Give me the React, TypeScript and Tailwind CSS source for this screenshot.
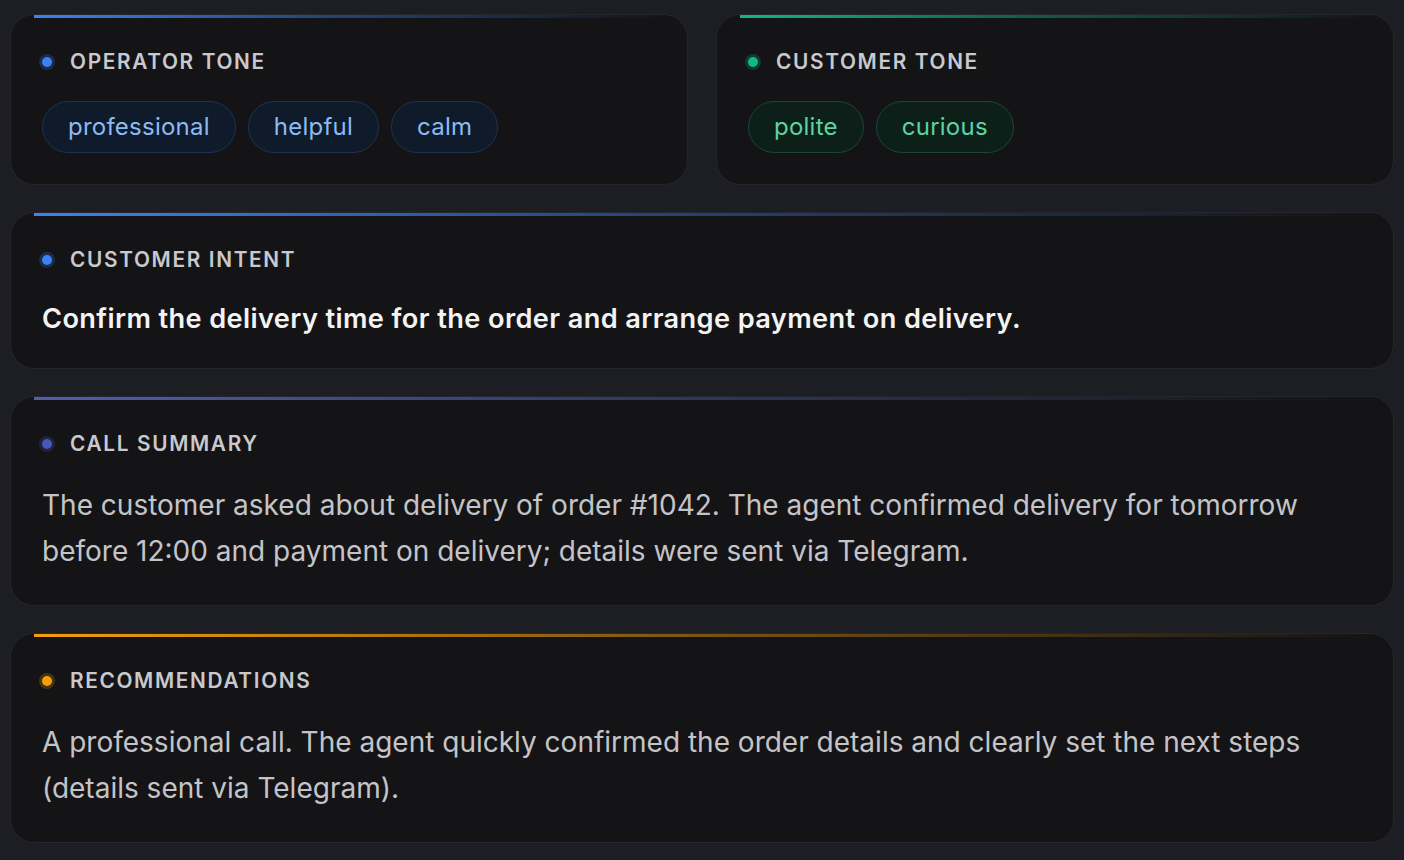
import React from "react";

type Accent = { line: string; dot: string; ring: string };

const ACC: Record<string, Accent> = {
  blue: {
    line: "bg-[linear-gradient(90deg,#3b82f6_0%,rgba(59,130,246,0.45)_45%,rgba(59,130,246,0)_100%)]",
    dot: "bg-[#3b82f6]",
    ring: "shadow-[0_0_0_3px_rgba(59,130,246,0.22)]",
  },
  green: {
    line: "bg-[linear-gradient(90deg,#10b981_0%,rgba(16,185,129,0.45)_45%,rgba(16,185,129,0)_100%)]",
    dot: "bg-[#10b981]",
    ring: "shadow-[0_0_0_3px_rgba(16,185,129,0.22)]",
  },
  indigo: {
    line: "bg-[linear-gradient(90deg,#4f5fae_0%,rgba(79,95,174,0.5)_45%,rgba(79,95,174,0)_100%)]",
    dot: "bg-[#4659b8]",
    ring: "shadow-[0_0_0_3px_rgba(70,89,184,0.22)]",
  },
  amber: {
    line: "bg-[linear-gradient(90deg,#f59e0b_0%,rgba(245,158,11,0.5)_45%,rgba(245,158,11,0)_100%)]",
    dot: "bg-[#f59e0b]",
    ring: "shadow-[0_0_0_3px_rgba(245,158,11,0.22)]",
  },
};

function Card({
  accent,
  title,
  gap,
  children,
}: {
  accent: Accent;
  title: string;
  gap: string;
  children: React.ReactNode;
}) {
  return (
    <div className="relative rounded-[24px] border border-[#25262b] bg-[#141416] px-[31px] pt-[33px] pb-[31px]">
      <div className={`absolute left-[23px] right-[23px] top-0 h-[3px] ${accent.line}`} />
      <div className={`flex flex-col ${gap}`}>
        <div className="flex h-[28px] items-center gap-[18px]">
          <span className={`h-[10px] w-[10px] rounded-full ${accent.dot} ${accent.ring}`} />
          <span className="text-[20.8px] font-semibold uppercase leading-[28px] tracking-[0.08em] text-[#c9c9cd]">
            {title}
          </span>
        </div>
        {children}
      </div>
    </div>
  );
}

function Pill({ children, tone }: { children: React.ReactNode; tone: "blue" | "green" }) {
  const cls =
    tone === "blue"
      ? "border-[#1e3350] bg-[#0f1a2a] text-[#8cbaf3]"
      : "border-[#1a4634] bg-[#0d1f19] text-[#5ed3a2]";
  return (
    <span
      className={`inline-flex h-[52px] items-center rounded-full border px-[25px] text-[24px] leading-none tracking-[0.01em] ${cls}`}
    >
      {children}
    </span>
  );
}

export default function App() {
  return (
    <div
      className="flex h-[860px] w-full flex-col gap-[27px] bg-[#1d1e23] px-[10px] pt-[14px]"
      style={{ fontFamily: "Inter, 'Noto Sans', 'Liberation Sans', sans-serif" }}
    >
      <div className="grid grid-cols-2 gap-[28px]">
        <Card accent={ACC.blue} title="Operator tone" gap="gap-[25px]">
          <div className="flex gap-[12px]">
            <Pill tone="blue">professional</Pill>
            <Pill tone="blue">helpful</Pill>
            <Pill tone="blue">calm</Pill>
          </div>
        </Card>
        <Card accent={ACC.green} title="Customer tone" gap="gap-[25px]">
          <div className="flex gap-[12px]">
            <Pill tone="green">polite</Pill>
            <Pill tone="green">curious</Pill>
          </div>
        </Card>
      </div>
      <Card accent={ACC.blue} title="Customer intent" gap="gap-[27px]">
        <p className="text-[27.2px] font-semibold leading-[36px] tracking-[0.014em] text-[#f3f3f4]">
          Confirm the delivery time for the order and arrange payment on delivery.
        </p>
      </Card>
      <Card accent={ACC.indigo} title="Call summary" gap="gap-[24px]">
        <p className="text-[28px] leading-[46px] text-[#c4c4c8]">
          The customer asked about delivery of order #1042. The agent confirmed delivery for tomorrow
          before 12:00 and payment on delivery; details were sent via Telegram.
        </p>
      </Card>
      <Card accent={ACC.amber} title="Recommendations" gap="gap-[24px]">
        <p className="text-[28px] leading-[46px] text-[#c4c4c8]">
          A professional call. The agent quickly confirmed the order details and clearly set the next
          steps (details sent via Telegram).
        </p>
      </Card>
    </div>
  );
}
